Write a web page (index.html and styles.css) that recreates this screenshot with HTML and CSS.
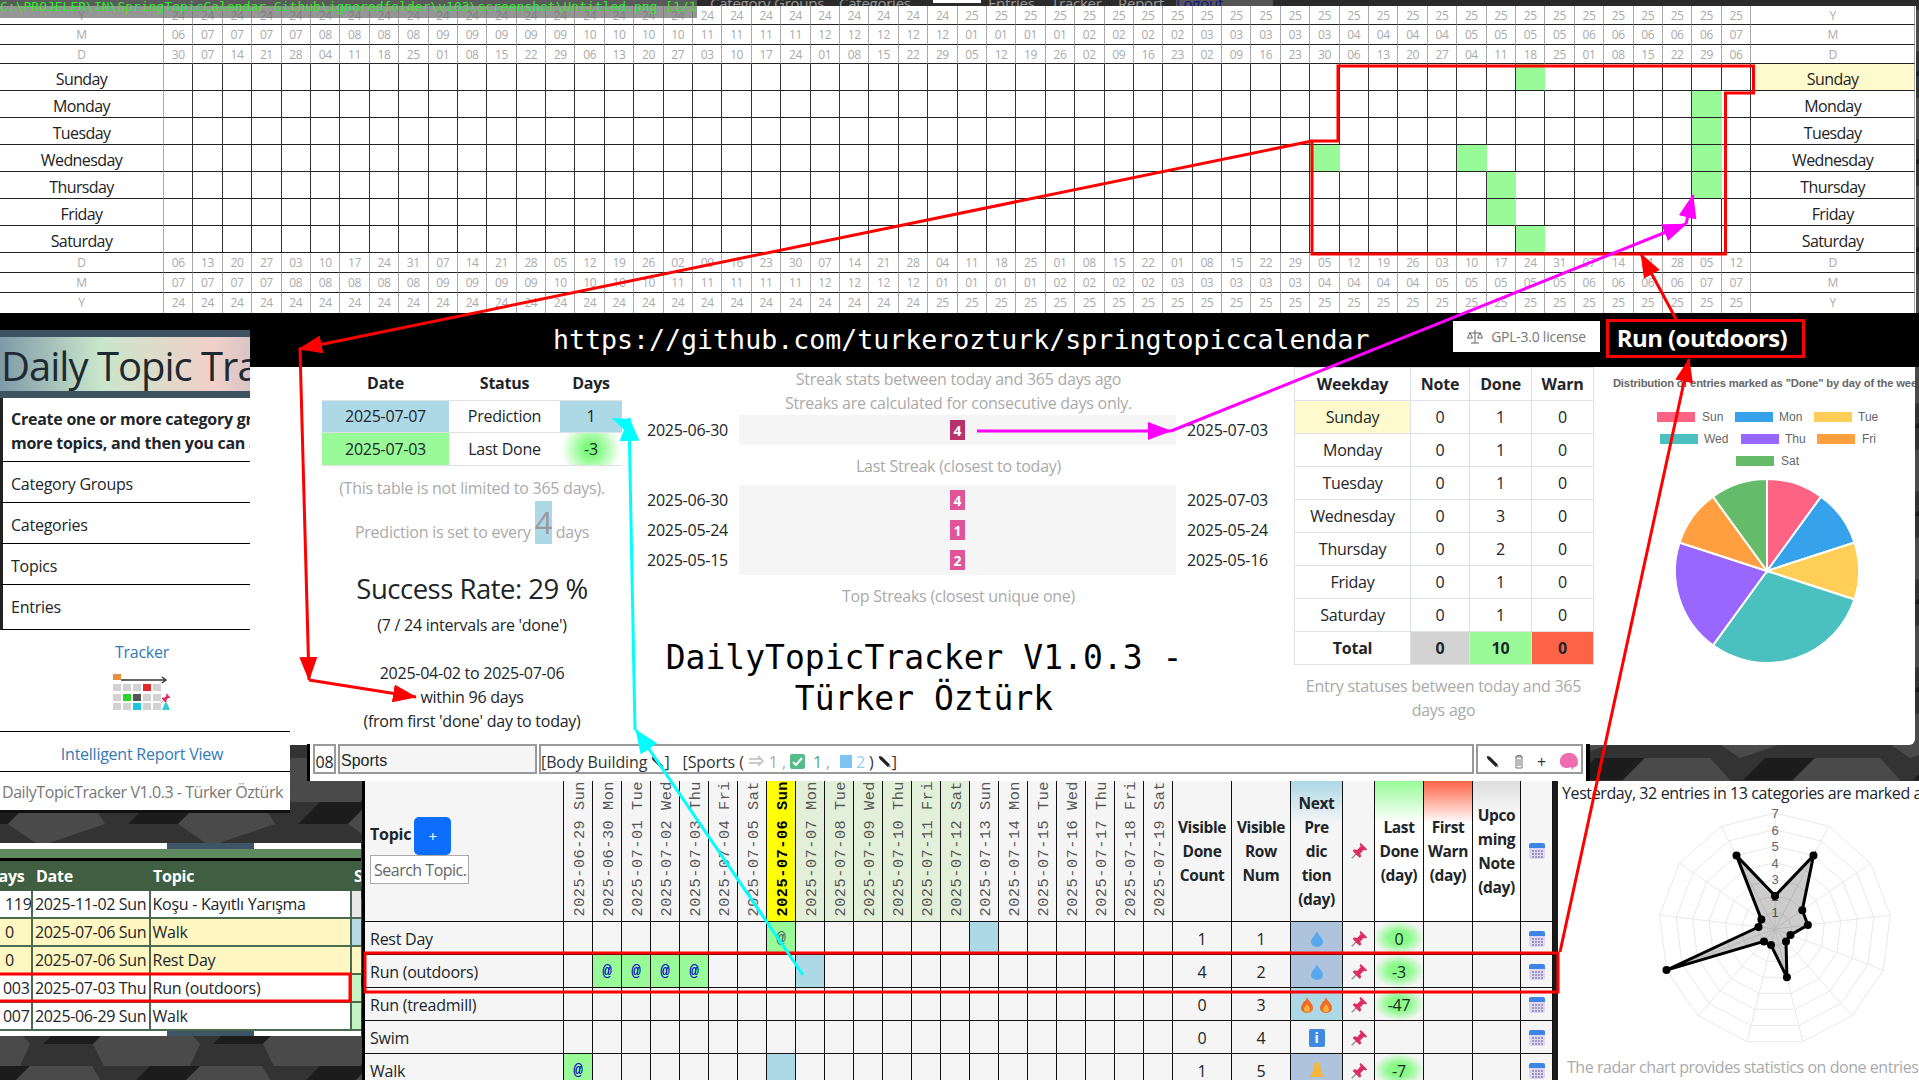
FILE: index.html
```html
<!DOCTYPE html>
<html lang="en">
<head>
<meta charset="utf-8">
<title>DailyTopicTracker V1.0.3 - Türker Öztürk</title>
<link rel="stylesheet" href="styles.css">
</head>
<body>
<svg width="0" height="0" class="defs">
  <defs>
    <pattern id="hex" width="170" height="88" patternUnits="userSpaceOnUse" x="-20" y="10">
      <rect width="170" height="88" fill="#333"/>
      <polygon points="0,0 50,0 28,22 -22,22" fill="#1c1c1c"/>
      <polygon points="170,0 220,0 198,22 148,22" fill="#1c1c1c"/>
      <polygon points="50,0 112,0 125,22 60,44 28,22" fill="#4a4a4a"/>
      <polygon points="85,44 135,44 113,66 63,66" fill="#1c1c1c"/>
      <polygon points="135,44 170,44 170,88 124,88 113,66" fill="#4a4a4a"/>
      <polygon points="0,44 30,44 50,66 40,88 0,88" fill="#4a4a4a"/>
    </pattern>
    <symbol id="i-pin" viewBox="0 0 20 20"><path d="M2 18 L9 11" stroke="#9a8f96" stroke-width="1.6"/><path d="M12 1 L19 8 L17.5 9.5 L15.5 8.5 L11.5 12.5 L12.5 16 L10.5 17.5 L3 10 L4.5 8 L8 8.8 L11.8 4.8 L10.6 2.6 Z" fill="#dd2e63"/></symbol>
    <symbol id="i-cal" viewBox="0 0 16 16"><rect y="3" width="16" height="13" rx="2" fill="#ddd7ee"/><path d="M0 5 V2 a2 2 0 0 1 2-2 H14 a2 2 0 0 1 2 2 V5 Z" fill="#3d86e6"/><g fill="#a096c8"><rect x="3" y="7" width="2" height="2"/><rect x="6" y="7" width="2" height="2"/><rect x="9" y="7" width="2" height="2"/><rect x="12" y="7" width="2" height="2"/><rect x="3" y="10" width="2" height="2"/><rect x="6" y="10" width="2" height="2"/><rect x="9" y="10" width="2" height="2"/><rect x="12" y="10" width="2" height="2"/><rect x="3" y="13" width="2" height="2"/><rect x="6" y="13" width="2" height="2"/><rect x="9" y="13" width="2" height="2"/><rect x="12" y="13" width="2" height="2"/></g></symbol>
    <symbol id="i-drop" viewBox="0 0 12 16"><path d="M6 0 C7 4 12 7 12 11 A6 5 0 0 1 0 11 C0 7 5 4 6 0 Z" fill="#58a8ee"/></symbol>
    <symbol id="i-fire" viewBox="0 0 12 16"><path d="M6 0 C7 4 12 6 12 11 A6 5 0 0 1 0 11 C0 8 2 7 3 4 C4 5 5 3 6 0 Z" fill="#ef6b24"/><path d="M6 7 C7 9 9 10 9 12 A3 3 0 0 1 3 12 C3 10 5 9 6 7 Z" fill="#f9b23c"/></symbol>
    <symbol id="i-bell" viewBox="0 0 14 18"><path d="M7 0 C9 0 10 2 10.500 5 C11 9 12 12 14 14 V15 H0 V14 C2 12 3 9 3.500 5 C4 2 5 0 7 0 Z" fill="#f5b63e"/></symbol>
    <symbol id="i-pen" viewBox="0 0 14 14"><path d="M1 1 L4 1.500 L13 10.500 L10.500 13 L1.500 4 Z" fill="#222"/><path d="M10.500 13 L13 10.500 L13.500 13.500 Z" fill="#888"/></symbol>
    <marker id="a-red" markerUnits="userSpaceOnUse" markerWidth="24" markerHeight="18" refX="23" refY="9" orient="auto"><polygon points="0,0 24,9 0,18" fill="#f00"/></marker>
    <marker id="a-mag" markerUnits="userSpaceOnUse" markerWidth="24" markerHeight="18" refX="23" refY="9" orient="auto"><polygon points="0,0 24,9 0,18" fill="#f0f"/></marker>
    <marker id="a-cya" markerUnits="userSpaceOnUse" markerWidth="24" markerHeight="20" refX="23" refY="10" orient="auto"><polygon points="0,0 24,10 0,20" fill="#0ff"/></marker>
  </defs>
</svg>

<main class="canvas">
  <svg class="backdrop" width="1919" height="1080"><rect width="1919" height="1080" fill="url(#hex)"/></svg>

  <section class="win win-cal">
    <nav class="topnav">
      <span class="nav-item nav-cg">Category Groups</span>
      <span class="nav-item nav-cats">Categories</span>
      <span class="nav-item nav-active"><span class="nav-tab">Topics</span></span>
      <span class="nav-item nav-ent">Entries</span>
      <span class="nav-item nav-trk">Tracker</span>
      <span class="nav-item nav-rep">Report</span>
      <span class="nav-logout">Logout</span>
    </nav>
    <div class="cal" id="cal"></div>
    <div class="band">
      <span class="band-url">https://github.com/turkerozturk/springtopiccalendar</span>
      <span class="license">
        <svg width="16" height="14" viewBox="0 0 16 14"><path d="M8 0 V13 M4 13 H12 M1.500 3 H14.500 M3 3 L0.500 8 H5.500 Z M13 3 L10.500 8 H15.500 Z" fill="none" stroke="#666" stroke-width="1"/></svg>
        GPL-3.0 license
      </span>
      <span class="band-topic">Run (outdoors)</span>
    </div>
  </section>

  <section class="win win-stats">
    <div class="col-a">
      <table class="dates">
        <tr><th class="w-date">Date</th><th class="w-status">Status</th><th class="w-days">Days</th></tr>
        <tr><td class="c-blue">2025-07-07</td><td>Prediction</td><td class="c-blue">1</td></tr>
        <tr><td class="c-green">2025-07-03</td><td>Last Done</td><td class="c-glow">-3</td></tr>
      </table>
      <p class="muted note">(This table is not limited to 365 days).</p>
      <p class="muted predict"><span>Prediction is set to every</span><span class="predict-n">4</span><span>days</span></p>
      <p class="rate">Success Rate: 29 %</p>
      <p class="line rate-sub">(7 / 24 intervals are 'done')</p>
      <p class="line rate-range">2025-04-02 to 2025-07-06</p>
      <p class="line">within 96 days</p>
      <p class="line">(from first 'done' day to today)</p>
    </div>
    <div class="col-b">
      <p class="muted line">Streak stats between today and 365 days ago</p>
      <p class="muted line">Streaks are calculated for consecutive days only.</p>
      <div class="streak">
        <span>2025-06-30</span><span class="bar"><b class="badge badge-dark">4</b></span><span class="end">2025-07-03</span>
      </div>
      <p class="muted line cap">Last Streak (closest to today)</p>
      <div class="streak streak-top">
        <span>2025-06-30</span><span class="bar"><b class="badge">4</b></span><span class="end">2025-07-03</span>
        <span>2025-05-24</span><span class="bar"><b class="badge">1</b></span><span class="end">2025-05-24</span>
        <span>2025-05-15</span><span class="bar"><b class="badge">2</b></span><span class="end">2025-05-16</span>
      </div>
      <p class="muted line cap">Top Streaks (closest unique one)</p>
      <h1 class="app-title">DailyTopicTracker V1.0.3 - Türker Öztürk</h1>
    </div>
    <div class="col-c">
      <table class="week">
        <tr><th class="wk-name">Weekday</th><th class="wk-note">Note</th><th class="wk-done">Done</th><th class="wk-warn">Warn</th></tr>
        <tr><td class="c-sun">Sunday</td><td>0</td><td>1</td><td>0</td></tr>
        <tr><td>Monday</td><td>0</td><td>1</td><td>0</td></tr>
        <tr><td>Tuesday</td><td>0</td><td>1</td><td>0</td></tr>
        <tr><td>Wednesday</td><td>0</td><td>3</td><td>0</td></tr>
        <tr><td>Thursday</td><td>0</td><td>2</td><td>0</td></tr>
        <tr><td>Friday</td><td>0</td><td>1</td><td>0</td></tr>
        <tr><td>Saturday</td><td>0</td><td>1</td><td>0</td></tr>
        <tr class="wk-total"><td>Total</td><td class="t-gray">0</td><td class="t-green">10</td><td class="t-red">0</td></tr>
      </table>
      <p class="muted week-note">Entry statuses between today and 365 days ago</p>
    </div>
    <div class="col-d">
      <svg class="pie" width="322" height="300" viewBox="1593 367 322 300">
        <text class="pie-title" x="1768" y="387">Distribution of entries marked as "Done" by day of the week</text>
        <g class="pie-legend">
          <rect x="1657" y="412" width="38" height="10" fill="#ff6384"/><text x="1702" y="421">Sun</text>
          <rect x="1735" y="412" width="38" height="10" fill="#36a2eb"/><text x="1779" y="421">Mon</text>
          <rect x="1814" y="412" width="38" height="10" fill="#ffce56"/><text x="1858" y="421">Tue</text>
          <rect x="1660" y="434" width="38" height="10" fill="#4bc0c0"/><text x="1704" y="443">Wed</text>
          <rect x="1741" y="434" width="38" height="10" fill="#9966ff"/><text x="1785" y="443">Thu</text>
          <rect x="1817" y="434" width="38" height="10" fill="#ff9f40"/><text x="1862" y="443">Fri</text>
          <rect x="1736" y="456" width="38" height="10" fill="#66bb6a"/><text x="1781" y="465">Sat</text>
        </g>
        <g transform="translate(1767 571)" stroke="#fff" stroke-width="2">
          <path d="M0 0 L0 -92 A92 92 0 0 1 54.080 -74.430 Z" fill="#ff6384"/>
          <path d="M0 0 L54.080 -74.430 A92 92 0 0 1 87.500 -28.430 Z" fill="#36a2eb"/>
          <path d="M0 0 L87.500 -28.430 A92 92 0 0 1 87.500 28.430 Z" fill="#ffce56"/>
          <path d="M0 0 L87.500 28.430 A92 92 0 0 1 -54.080 74.430 Z" fill="#4bc0c0"/>
          <path d="M0 0 L-54.080 74.430 A92 92 0 0 1 -87.500 -28.430 Z" fill="#9966ff"/>
          <path d="M0 0 L-87.500 -28.430 A92 92 0 0 1 -54.080 -74.430 Z" fill="#ff9f40"/>
          <path d="M0 0 L-54.080 -74.430 A92 92 0 0 1 0 -92 Z" fill="#66bb6a"/>
        </g>
      </svg>
    </div>
  </section>

  <aside class="win win-menu">
    <div class="brand"><span class="brand-text">Daily Topic Tracker</span></div>
    <div class="intro">
      <b>Create one or more category groups, categories,</b><br>
      <b>more topics, and then you can add entries.</b>
    </div>
    <ul class="menu">
      <li>Category Groups</li>
      <li>Categories</li>
      <li>Topics</li>
      <li>Entries</li>
    </ul>
  </aside>

  <aside class="win win-links">
    <a class="link-block tracker">Tracker
      <svg class="tracker-ico" width="58" height="37" viewBox="0 0 58 37">
        <rect width="8" height="6" fill="#e8923e"/>
        <path d="M8 6 H52" stroke="#333" stroke-width="1.400"/><path d="M49 3 L53 6 L49 9" fill="none" stroke="#333" stroke-width="1.400"/>
        <g fill="#d2d2d2">
          <rect x="0" y="10" width="8" height="7"/><rect x="10" y="10" width="8" height="7"/><rect x="20" y="10" width="8" height="7"/><rect x="40" y="10" width="8" height="7"/>
          <rect x="0" y="20" width="8" height="7"/><rect x="30" y="20" width="8" height="7"/><rect x="40" y="20" width="8" height="7"/>
          <rect x="0" y="29" width="8" height="7"/><rect x="10" y="29" width="8" height="7"/><rect x="30" y="29" width="8" height="7"/><rect x="40" y="29" width="8" height="7"/>
        </g>
        <rect x="30" y="10" width="8" height="7" fill="#e22a2a"/>
        <rect x="10" y="20" width="8" height="7" fill="#25d825"/>
        <rect x="20" y="20" width="8" height="7" fill="#555"/>
        <rect x="20" y="29" width="8" height="7" fill="#1bc6dc"/>
        <use href="#i-pin" x="47" y="19" width="11" height="11"/>
        <path d="M52 29 L49 36 H57 L54 29 Z" fill="#33cdd6"/>
      </svg>
    </a>
    <a class="link-block report">Intelligent Report View</a>
    <div class="footer-text">DailyTopicTracker V1.0.3 - Türker Öztürk</div>
  </aside>

  <section class="win win-entries">
    <div class="entries-top"></div>
    <div class="entries-green"></div>
    <div class="entries-head"><span class="eh-days">Days</span><span class="eh-date">Date</span><span class="eh-topic">Topic</span><span class="eh-s">Status</span></div>
    <div class="e-row"><span class="e-n">119</span><span class="e-d">2025-11-02 Sun</span><span class="e-t">Koşu - Kayıtlı Yarışma</span><span class="e-s s-gray"></span></div>
    <div class="e-row e-today"><span class="e-n">0</span><span class="e-d">2025-07-06 Sun</span><span class="e-t">Walk</span><span class="e-s s-blue"></span></div>
    <div class="e-row e-today"><span class="e-n">0</span><span class="e-d">2025-07-06 Sun</span><span class="e-t">Rest Day</span><span class="e-s s-yellow"></span></div>
    <div class="e-row"><span class="e-n e-n-long">003</span><span class="e-d">2025-07-03 Thu</span><span class="e-t">Run (outdoors)</span><span class="e-s s-green"></span></div>
    <div class="e-row"><span class="e-n e-n-long">007</span><span class="e-d">2025-06-29 Sun</span><span class="e-t">Walk</span><span class="e-s s-green"></span></div>
    <div class="entries-bottom"></div>
  </section>

  <section class="win win-bar">
    <div class="bar-cell bc-num">08</div>
    <div class="bar-cell bc-name">Sports</div>
    <div class="bar-cell bc-info">
      <span class="bi-group">[Body Building <svg class="pen" width="13" height="13"><use href="#i-pen"/></svg>]</span>
      <span>[Sports (</span>
      <svg class="soon" width="17" height="15" viewBox="0 0 17 15"><path d="M1 5 H13 M1 9 H13 M10 2 L15 7 L10 12" fill="none" stroke="#bbb" stroke-width="1.500"/></svg>
      <span class="bi-gray">1 ,</span>
      <svg width="15" height="15" viewBox="0 0 15 15"><rect width="15" height="15" rx="2" fill="#55bb88"/><path d="M3 8 L6 11 L12 4" fill="none" stroke="#fff" stroke-width="2"/></svg>
      <span class="bi-green">1</span><span class="bi-gray">,</span>
      <span class="bi-sq"></span>
      <span class="bi-blue">2</span>
      <span>)</span>
      <svg class="pen" width="13" height="13"><use href="#i-pen"/></svg><span class="bi-close">]</span>
    </div>
    <div class="bar-cell bc-tools">
      <svg width="13" height="13"><use href="#i-pen"/></svg>
      <svg width="10" height="14" viewBox="0 0 10 14"><path d="M1 2 H9 M2 2 V13 H8 V2 M4 4 V11 M6 4 V11 M3 2 V0.500 H7 V2" fill="none" stroke="#777" stroke-width="1"/></svg>
      <span class="tool-plus">+</span>
      <svg width="20" height="18" viewBox="0 0 20 18"><path d="M9 0 C14 -1 19 3 19 9 C19 12 18 14 15 14 L13 17 L12 14 C8 16 2 15 1 10 C0 5 4 0 9 0 Z" fill="#ee6cb0"/></svg>
    </div>
  </section>

  <section class="win win-topics" id="topics"></section>

  <aside class="win win-radar">
    <p class="radar-head">Yesterday, 32 entries in 13 categories are marked as done.</p>
    <svg class="radar" id="radar" width="361" height="260" viewBox="1558 805 361 260"></svg>
    <p class="muted radar-foot">The radar chart provides statistics on done entries from yesterday.</p>
  </aside>

  <div class="win win-pathbar">C:\PROJELER\IN\SpringTopicCalendar-Github\ignoredfolder\v103\screenshot\Untitled.png [1/1]</div>

  <svg class="win annot" width="1919" height="1080" viewBox="0 0 1919 1080">
    <g fill="none" stroke="#f00" stroke-width="3">
      <path d="M1338 66 H1753.500 V93 H1725.500 V254 H1312 V141 H1338 Z"/>
      <path d="M1312 141 L299 349" marker-end="url(#a-red)"/>
      <path d="M300 349 L309 680" marker-end="url(#a-red)"/>
      <path d="M309 680 L416 697" marker-end="url(#a-red)"/>
      <rect x="1607.500" y="320.500" width="196" height="36"/>
      <path d="M1676 319 L1641 254" marker-end="url(#a-red)"/>
      <path d="M1560 952 L1689 359" marker-end="url(#a-red)"/>
      <rect x="365" y="953" width="1193" height="39"/>
      <rect x="-3" y="974" width="353" height="27"/>
    </g>
    <g fill="none" stroke="#0ff" stroke-width="3">
      <path d="M803 975 L636 730" marker-end="url(#a-cya)"/>
      <path d="M635 730 L629 418" marker-end="url(#a-cya)"/>
    </g>
    <polygon points="612,418 631,419 625,431" fill="#0ff"/>
    <g fill="none" stroke="#f0f" stroke-width="3">
      <path d="M977 431 H1171" marker-end="url(#a-mag)"/>
      <path d="M1171 431 L1686 224" marker-end="url(#a-mag)"/>
      <path d="M1686 224 L1693 195" marker-end="url(#a-mag)"/>
    </g>
  </svg>
</main>
<script src="script.js"></script>
</body>
</html>
```
FILE: styles.css
```css
* { box-sizing: border-box; }
html, body { margin: 0; padding: 0; width: 1919px; height: 1080px; overflow: hidden; background: #222; }
body { font: 16px/24px "Open Sans", "Noto Sans", sans-serif; letter-spacing: -0.25px; color: #212529; }
p, h1, ul { margin: 0; padding: 0; }
.defs { position: absolute; }
.canvas { position: relative; width: 1919px; height: 1080px; overflow: hidden; }
.backdrop { position: absolute; inset: 0; }
.win { position: absolute; }

/* calendar window */
.win-cal { left: 0; top: 0; width: 1919px; }
.topnav { height: 6px; overflow: hidden; background: #2b2b2b; display: flex; font-size: 15px; color: #999; padding-left: 710px; }
.nav-item { flex: none; height: 6px; line-height: 6px; white-space: nowrap; }
.nav-cg { width: 129px; }
.nav-cats { width: 94px; }
.nav-active { width: 55px; }
.nav-tab { display: block; width: 48px; height: 3px; background: #fff; color: #fff; overflow: hidden; line-height: 3px; }
.nav-ent { width: 63px; }
.nav-trk { width: 67px; }
.nav-rep { width: 58px; }
.nav-logout { flex: none; height: 6px; line-height: 6px; color: #11118a; background: #555; padding-right: 50px; }
.cal { display: grid; grid-template-columns: 164px repeat(54, 29.4px) 164px; grid-template-rows: 19px 20px 19px repeat(7, 27px) 20px 20px 20px; width: 1916px; background: #fff; }
.cc { border-right: 1px solid #aaa; border-bottom: 1px solid #222; font-size: 12px; line-height: 20px; color: #aaa; text-align: center; letter-spacing: -0.4px; overflow: hidden; }
.cc-last { border-bottom: none; }
.cd { border-right: 1px solid #333; border-bottom: 1px solid #222; }
.cd-on { background: #98fb98; border-right-color: #98fb98; }
.cl { border-right: 1px solid #aaa; border-bottom: 1px solid #222; font-size: 16px; line-height: 26px; padding-top: 2px; text-align: center; color: #222; letter-spacing: -0.6px; }
.cl-sun { background: #fffacd; }
.band { height: 54px; background: #000; position: relative; display: flex; align-items: center; padding-left: 553px; }
.band-url { font: 26.6px/54px "DejaVu Sans Mono", monospace; letter-spacing: 0; color: #fff; white-space: nowrap; width: 900px; }
.license { display: flex; align-items: center; justify-content: center; gap: 8px; width: 147px; height: 31px; background: #fff; color: #777; font-size: 14px; margin-top: -7px; }
.band-topic { color: #fff; font-weight: 700; font-size: 24px; line-height: 39px; margin-left: 8px; width: 188px; text-align: center; white-space: nowrap; margin-top: -6px; letter-spacing: -0.6px; }

/* stats window */
.win-stats { left: 250px; top: 367px; width: 1665px; height: 378px; background: #fff; border-bottom-right-radius: 6px; display: grid; grid-template-columns: 325px 647px 299px 322px; padding-left: 72px; }
.col-a { width: 300px; text-align: center; }
.col-b { width: 623px; text-align: center; }
.col-c { text-align: center; }
.muted { color: #aaa; }
.line { line-height: 24px; }
.dates { width: 300px; border-collapse: collapse; table-layout: fixed; }
.dates th { height: 33px; padding: 0; font-weight: 700; }
.dates td { height: 32.5px; padding: 0; border-top: 1px solid #dee2e6; border-bottom: 1px solid #dee2e6; }
.w-date { width: 127px; } .w-status { width: 111px; } .w-days { width: 62px; }
.c-blue { background: #add8e6; }
.c-green { background: #98fb98; }
.c-glow { background: radial-gradient(circle, #7dfb7d 20%, #fff 85%); }
.note { margin-top: 10px; }
.predict { margin-top: 1px; height: 43px; display: flex; justify-content: center; align-items: flex-end; gap: 4px; }
.predict-n { width: 17px; background: #add8e6; font-size: 31px; line-height: 43px; color: #999; height: 43px; letter-spacing: 0; }
.rate { margin-top: 24px; font-size: 27.5px; line-height: 42px; letter-spacing: -0.5px; }
.rate-sub { margin-top: 3px; }
.rate-range { margin-top: 24px; }
.streak { display: grid; grid-template-columns: 92px 437px 94px; text-align: left; }
.streak-top { margin-top: 7px; }
.streak > span { line-height: 30px; height: 30px; }
.streak .end { padding-left: 11px; }
.streak .bar { background: #f5f5f5; display: flex; align-items: center; justify-content: center; }
.badge { width: 15px; height: 20px; background: #e0559a; color: #fff; font-size: 14px; line-height: 22px; text-align: center; display: block; }
.badge-dark { background: #b8306c; }
.cap { margin-top: 9px; }
.app-title { margin-top: 29px; width: 554px; font: 400 33px/41px "DejaVu Sans Mono", monospace; letter-spacing: 0; color: #000; text-align: center; }
.week { width: 299px; border-collapse: collapse; table-layout: fixed; }
.week th, .week td { height: 33px; padding: 0; border: 1px solid #dee2e6; }
.wk-name { width: 116px; } .wk-note { width: 59px; } .wk-done { width: 62px; } .wk-warn { width: 62px; }
.c-sun { background: #fffacd; }
.wk-total td { font-weight: 700; }
.wk-total .t-gray { background: #d3d3d3; }
.wk-total .t-green { background: #98fb98; }
.wk-total .t-red { background: #ff6347; }
.week-note { margin-top: 9px; }
.pie { display: block; }
.pie-title { font: 700 11.2px "Liberation Sans", sans-serif; letter-spacing: -0.15px; fill: #666; text-anchor: middle; }
.pie-legend text { font: 12px "Liberation Sans", sans-serif; letter-spacing: 0; fill: #666; }

/* left menu */
.win-menu { left: 0; top: 330px; width: 250px; height: 300px; background: #fff; overflow: hidden; }
.brand { height: 68px; border-top: 7px solid #3f5260; border-bottom: 7px solid #3f5260; background: linear-gradient(90deg, #7f9aa8, #c9e6cb 40%, #f1d0c9 85%, #d9c5c5); overflow: hidden; white-space: nowrap; line-height: 58px; }
.brand-text { font-size: 40px; line-height: 58px; padding-left: 1px; color: #1f2a30; letter-spacing: -1px; }
.intro { border-left: 3px solid #222; border-bottom: 1px solid #000; height: 64px; padding: 9px 0 0 8px; white-space: nowrap; overflow: hidden; }
.menu { list-style: none; }
.menu li { border-left: 3px solid #222; border-bottom: 1px solid #000; height: 41px; line-height: 45px; padding-left: 8px; }
.menu li:last-child { height: 45px; padding-bottom: 4px; line-height: 45px; }
.win-links { left: 0; top: 630px; width: 290px; height: 183px; background: #fff; border-bottom: 3px solid #111; text-align: center; }
.link-block { display: block; color: #337ab7; width: 284px; }
.tracker { height: 102px; padding-top: 10px; border-bottom: 1px solid #000; width: 290px; padding-right: 6px; }
.tracker-ico { display: block; margin: 10px auto 0; }
.report { padding-top: 10px; height: 40px; border-bottom: 1px solid #000; width: 290px; padding-right: 6px; line-height: 24px; }
.footer-text { color: #777; line-height: 40px; text-align: left; padding-left: 2px; white-space: nowrap; letter-spacing: -0.45px; }

/* entries table */
.win-entries { left: 0; top: 843px; width: 361px; overflow: hidden; }
.entries-top { height: 6px; background: linear-gradient(90deg, #fff 167px, #3f5466 167px, #3f5466 254px, #fff 254px); }
.entries-green { height: 9px; background: #5f8a60; }
.entries-head { height: 33px; background: #3f5e42; border-top: 3px solid #000; color: #fff; font-weight: 700; position: relative; white-space: nowrap; }
.eh-days { position: absolute; left: -13px; top: 3px; }
.eh-date { position: absolute; left: 36px; top: 3px; }
.eh-topic { position: absolute; left: 153px; top: 3px; }
.eh-s { position: absolute; left: 354px; top: 3px; }
.e-row { height: 28px; display: grid; grid-template-columns: 33px 117.5px 201.5px 9px; background: #fff; border-bottom: 2px solid #4b6b50; white-space: nowrap; overflow: hidden; line-height: 27px; }
.e-today { background: #fff7c2; }
.e-n { padding-left: 5px; border-right: 2px solid #4b6b50; letter-spacing: -0.3px; overflow: hidden; }
.e-n-long { padding-left: 3px; }
.e-d { padding-left: 2px; overflow: hidden; border-right: 2px solid #4b6b50; letter-spacing: -0.35px; }
.e-t { padding-left: 2px; border-right: 2px solid #4b6b50; }
.s-gray { background: #e8e8e8; } .s-blue { background: #b8d8e8; } .s-yellow { background: #fff7c2; } .s-green { background: #c4f4c4; }
.entries-bottom { height: 5px; background: linear-gradient(90deg, #fff 167px, #3f5466 167px, #3f5466 254px, #fff 254px); }

/* sticky bar */
.win-bar { left: 307px; top: 744px; width: 1283px; height: 37px; background: #fff; border-left: 3px solid #000; border-right: 4px solid #000; display: flex; gap: 2px; padding: 0 3px 7px 3px; }
.bar-cell { flex: none; border: 2px solid #999; line-height: 26px; white-space: nowrap; display: flex; align-items: center; padding-top: 5px; }
.bc-num { width: 23px; justify-content: center; }
.bc-name { width: 199px; background: #f5f5f5; font-family: "Liberation Sans", sans-serif; letter-spacing: 0; padding-left: 1px; padding-top: 4px; }
.bc-info { width: 935px; padding-left: 0; gap: 4px; color: #333; letter-spacing: -0.1px; }
.bi-group { margin-right: 9px; }
.pen { vertical-align: -1px; }
.bi-gray { color: #aaa; }
.bi-green { color: #55aa77; margin-left: 4px; }
.bi-blue { color: #8fd0f0; }
.bi-sq { width: 12px; height: 13px; background: #7cc4f2; margin-left: 6px; }
.bi-close { margin-left: -3px; }
.bc-tools { width: 107px; gap: 15px; padding-left: 8px; }
.tool-plus { color: #333; margin-left: -2px; margin-right: -2px; }

/* topic table */
.win-topics { left: 362px; top: 781px; width: 1191px; border-left: 3px solid #000; display: grid; grid-template-columns: 199px repeat(21, 29px) 59px 59px 52px 32px 49px 49px 48px 32px; grid-template-rows: 141px repeat(5, 33px); background: #f5f5f5; }
.th, .td { border-right: 1px solid #111; border-bottom: 1px solid #111; }
.th-topic { padding: 36px 0 0 5px; }
.th-topic b { display: inline-block; line-height: 34px; vertical-align: top; }
.add { display: inline-block; width: 37px; height: 38px; margin-left: 3px; background: #0d6efd; color: #fff; text-align: center; line-height: 38px; border-radius: 5px; vertical-align: top; font-size: 15px; }
.search { display: block; width: 99px; height: 29px; border: 1px solid #aaa; background: #fff; color: #666; padding-left: 3px; line-height: 28px; overflow: hidden; white-space: nowrap; letter-spacing: -0.5px; }
.th-date { display: flex; justify-content: center; align-items: flex-end; padding: 0 0 4px 4px; border-bottom: 1px solid #111; border-right: 1px solid #111; }
.th-date span { writing-mode: vertical-rl; transform: rotate(180deg); font: 15.3px/18px "Liberation Mono", monospace; letter-spacing: 0.5px; color: #555; white-space: pre; }
.th-soon { background: #e2f0d9; }
.th-today { background: #ffff00; }
.th-today span { font-weight: 700; color: #000; }
.th-text { display: flex; align-items: center; justify-content: center; text-align: center; font-weight: 700; line-height: 24px; font-size: 15.5px; letter-spacing: -0.4px; }
.g-blue { background: linear-gradient(#add8e6, #f5f5f5 30%); }
.g-green { background: linear-gradient(#98fb98, #fff 30%); }
.g-red { background: linear-gradient(#ff6347, #fff 30%); }
.g-gray { background: linear-gradient(#ddd, #fff 30%); }
.td { display: flex; align-items: center; justify-content: center; overflow: hidden; padding-top: 2px; }
.td-name { justify-content: flex-start; padding-left: 5px; white-space: nowrap; }
.td-at { background: #98fb98; color: #0000cd; font: 700 16px "Liberation Mono", monospace; letter-spacing: 0; }
.td-at-dim { color: #3c6f5a; }
.td-pred { background: #add8e6; }
.td-pred-b { background: #aec4dc; }
.td-flames { gap: 7px; }
.td-glow { background: radial-gradient(ellipse at center, #88fb88 30%, #f5f5f5 75%); }
.info { width: 16px; height: 18px; border-radius: 2px; background: #3d8be0; color: #fff; font-weight: 700; font-size: 14px; line-height: 18px; text-align: center; }

/* radar */
.win-radar { left: 1553px; top: 781px; width: 366px; height: 299px; background: #fff; border-left: 5px solid #1a1a1a; overflow: hidden; }
.radar-head { white-space: nowrap; font-size: 16px; padding: 0 0 0 4px; line-height: 24px; letter-spacing: -0.4px; }
.radar { display: block; }
.radar-grid { fill: none; stroke: #e8e8e8; stroke-width: 1; }
.radar-data { fill: rgba(0, 0, 0, 0.2); stroke: #000; stroke-width: 3; }
.radar-label { font: 13px "Liberation Sans", sans-serif; letter-spacing: 0; fill: #666; text-anchor: middle; }
.radar-foot { white-space: nowrap; padding-left: 9px; margin-top: -10px; letter-spacing: -0.45px; }

/* path overlay */
.win-pathbar { left: 0; top: 0; width: 697px; height: 18px; background: rgba(110, 110, 110, 0.72); color: #2be92b; font: 13px/14px "DejaVu Sans Mono", monospace; letter-spacing: 0; white-space: nowrap; overflow: hidden; }
.annot { left: 0; top: 0; pointer-events: none; }
```
FILE: script.js
```js
// Calendar grid
(function () {
  var cal = document.getElementById('cal');
  var pad = function (n) { return (n < 10 ? '0' : '') + n; };
  function cells(start, pick, label, extra) {
    var html = '<div class="cc ' + extra + '">' + label + '</div>';
    for (var i = 0; i < 54; i++) {
      var d = new Date(2024, start[0], start[1] + i * 7);
      html += '<div class="cc ' + extra + '">' + pick(d) + '</div>';
    }
    return html + '<div class="cc ' + extra + '">' + label + '</div>';
  }
  var Y = function (d) { return pad(d.getFullYear() % 100); };
  var M = function (d) { return pad(d.getMonth() + 1); };
  var D = function (d) { return pad(d.getDate()); };
  var top = [5, 30], bottom = [6, 6];
  var html = cells(top, Y, 'Y', '') + cells(top, M, 'M', '') + cells(top, D, 'D', '');
  var on = { '3:39': 1, '3:44': 1, '4:45': 1, '5:45': 1, '0:46': 1, '6:46': 1, '1:52': 1, '2:52': 1, '3:52': 1, '4:52': 1 };
  ['Sunday', 'Monday', 'Tuesday', 'Wednesday', 'Thursday', 'Friday', 'Saturday'].forEach(function (name, r) {
    html += '<div class="cl">' + name + '</div>';
    for (var c = 0; c < 54; c++) html += '<div class="cd' + (on[r + ':' + c] ? ' cd-on' : '') + '"></div>';
    html += '<div class="cl' + (r === 0 ? ' cl-sun' : '') + '">' + name + '</div>';
  });
  html += cells(bottom, D, 'D', '') + cells(bottom, M, 'M', '') + cells(bottom, Y, 'Y', 'cc-last');
  cal.innerHTML = html;
})();

// Topic table
(function () {
  var use = function (id, w, h) { return '<svg width="' + w + '" height="' + h + '"><use href="#' + id + '"/></svg>'; };
  var days = ['Sun', 'Mon', 'Tue', 'Wed', 'Thu', 'Fri', 'Sat'];
  var pad = function (n) { return (n < 10 ? '0' : '') + n; };
  var h = '<div class="th th-topic"><b>Topic</b><span class="add">+</span><span class="search">Search Topic...</span></div>';
  for (var i = 0; i < 21; i++) {
    var d = new Date(2025, 5, 29 + i);
    var s = d.getFullYear() + '-' + pad(d.getMonth() + 1) + '-' + pad(d.getDate()) + ' ' + days[d.getDay()];
    var cls = i === 7 ? ' th-today' : (i > 7 && i < 14 ? ' th-soon' : '');
    h += '<div class="th-date' + cls + '"><span>' + s + '</span></div>';
  }
  [['Visible<br>Done<br>Count', ''], ['Visible<br>Row<br>Num', ''], ['Next<br>Pre<br>dic<br>tion<br>(day)', 'g-blue']].forEach(function (x) {
    h += '<div class="th th-text ' + x[1] + '">' + x[0] + '</div>';
  });
  h += '<div class="th th-text">' + use('i-pin', 18, 18) + '</div>';
  [['Last<br>Done<br>(day)', 'g-green'], ['First<br>Warn<br>(day)', 'g-red'], ['Upco<br>ming<br>Note<br>(day)', 'g-gray']].forEach(function (x) {
    h += '<div class="th th-text ' + x[1] + '">' + x[0] + '</div>';
  });
  h += '<div class="th th-text">' + use('i-cal', 16, 16) + '</div>';
  var rows = [
    { n: 'Rest Day', at: { 7: 'td-at-dim' }, blue: [14], v: 1, r: 1, p: 'drop', l: '0' },
    { n: 'Run (outdoors)', at: { 1: '', 2: '', 3: '', 4: '' }, blue: [8], v: 4, r: 2, p: 'drop', l: '-3' },
    { n: 'Run (treadmill)', at: {}, blue: [], v: 0, r: 3, p: 'fire', l: '-47' },
    { n: 'Swim', at: {}, blue: [], v: 0, r: 4, p: 'info', l: '' },
    { n: 'Walk', at: { 0: '' }, blue: [7], v: 1, r: 5, p: 'bell', l: '-7' }
  ];
  rows.forEach(function (row) {
    h += '<div class="td td-name">' + row.n + '</div>';
    for (var c = 0; c < 21; c++) {
      if (row.at[c] !== undefined) h += '<div class="td td-at ' + row.at[c] + '">@</div>';
      else h += '<div class="td' + (row.blue.indexOf(c) >= 0 ? ' c-blue' : '') + '"></div>';
    }
    h += '<div class="td">' + row.v + '</div><div class="td">' + row.r + '</div>';
    if (row.p === 'drop') h += '<div class="td td-pred-b">' + use('i-drop', 12, 16) + '</div>';
    if (row.p === 'fire') h += '<div class="td td-pred td-flames">' + use('i-fire', 12, 16) + use('i-fire', 12, 16) + '</div>';
    if (row.p === 'info') h += '<div class="td"><span class="info">i</span></div>';
    if (row.p === 'bell') h += '<div class="td td-pred-b">' + use('i-bell', 14, 18) + '</div>';
    h += '<div class="td">' + use('i-pin', 18, 18) + '</div>';
    h += '<div class="td' + (row.l ? ' td-glow' : '') + '">' + row.l + '</div><div class="td"></div><div class="td"></div>';
    h += '<div class="td">' + use('i-cal', 16, 16) + '</div>';
  });
  document.getElementById('topics').innerHTML = h;
})();

// Radar chart
(function () {
  var cx = 1775, cy = 929, unit = 116 / 7;
  var data = [2, 5, 2, 2, 1, 1, 3, 1, 1, 7, 1, 1, 5];
  function pt(i, v) {
    var a = i * 2 * Math.PI / 13;
    return [(cx + Math.sin(a) * v * unit).toFixed(1), (cy - Math.cos(a) * v * unit).toFixed(1)];
  }
  var s = '';
  for (var v = 1; v <= 7; v++) {
    var pts = [];
    for (var i = 0; i < 13; i++) pts.push(pt(i, v).join(','));
    s += '<polygon class="radar-grid" points="' + pts.join(' ') + '"/>';
  }
  for (var j = 0; j < 13; j++) {
    var o = pt(j, 7);
    s += '<line class="radar-grid" x1="' + cx + '" y1="' + cy + '" x2="' + o[0] + '" y2="' + o[1] + '"/>';
  }
  for (var k = 1; k <= 7; k++) s += '<text class="radar-label" x="' + cx + '" y="' + (cy - k * unit + 5).toFixed(1) + '">' + k + '</text>';
  var d = data.map(function (val, i) { return pt(i, val).join(','); }).join(' ');
  s += '<polygon class="radar-data" points="' + d + '"/>';
  data.forEach(function (val, i) {
    var p = pt(i, val);
    s += '<circle cx="' + p[0] + '" cy="' + p[1] + '" r="4" fill="#000"/>';
  });
  document.getElementById('radar').innerHTML = s;
})();
```
